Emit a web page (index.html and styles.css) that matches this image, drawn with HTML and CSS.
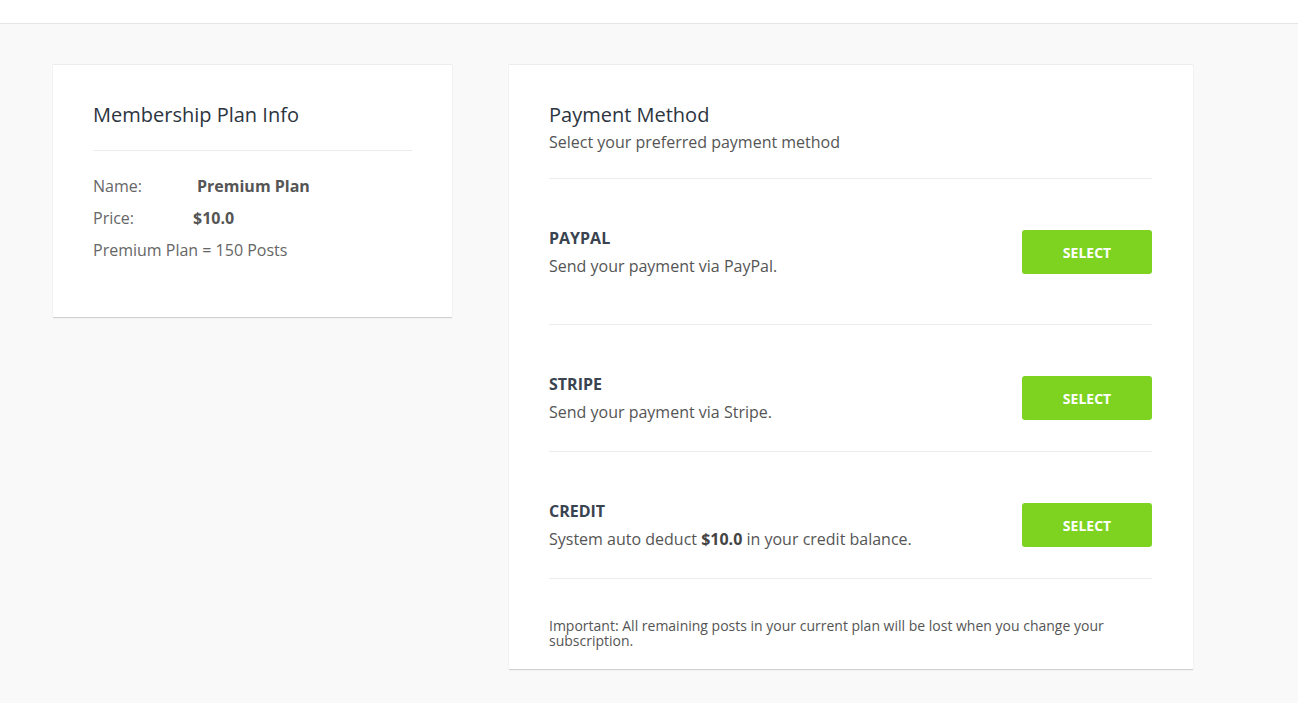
FILE: index.html
```html
<!DOCTYPE html>
<html lang="en">
<head>
<meta charset="utf-8">
<title>Membership Payment</title>
<link rel="stylesheet" href="styles.css">
</head>
<body>
<header class="topbar"></header>
<main class="content">
  <section class="card plan-card">
    <h2 class="card-title">Membership Plan Info</h2>
    <hr class="divider plan-divider">
    <div class="plan-row"><span class="label label-name">Name:</span><strong class="value">Premium Plan</strong></div>
    <div class="plan-row"><span class="label label-price">Price:</span><strong class="value">$10.0</strong></div>
    <div class="plan-row">Premium Plan = 150 Posts</div>
  </section>
  <section class="card pay-card">
    <h2 class="card-title">Payment Method</h2>
    <p class="subtitle">Select your preferred payment method</p>
    <hr class="divider head-divider">
    <div class="method method-first">
      <div class="method-text">
        <div class="method-name">PAYPAL</div>
        <div class="method-desc">Send your payment via PayPal.</div>
      </div>
      <button class="select-btn">SELECT</button>
    </div>
    <hr class="divider">
    <div class="method">
      <div class="method-text">
        <div class="method-name">STRIPE</div>
        <div class="method-desc">Send your payment via Stripe.</div>
      </div>
      <button class="select-btn">SELECT</button>
    </div>
    <hr class="divider">
    <div class="method">
      <div class="method-text">
        <div class="method-name">CREDIT</div>
        <div class="method-desc">System auto deduct <strong>$10.0</strong> in your credit balance.</div>
      </div>
      <button class="select-btn">SELECT</button>
    </div>
    <hr class="divider">
    <p class="notice">Important: All remaining posts in your current plan will be lost when you change your subscription.</p>
  </section>
</main>
</body>
</html>
```
FILE: styles.css
```css
* { box-sizing: border-box; }
html, body { margin: 0; padding: 0; }
body {
  background: #f9f9f9;
  font-family: "Open Sans", "Liberation Sans", sans-serif;
  color: #555;
  height: 703px;
  overflow: hidden;
}
.topbar {
  height: 24px;
  background: #fff;
  border-bottom: 1px solid #e6e6e6;
}
.content {
  display: flex;
  align-items: flex-start;
  gap: 57px;
  padding: 40px 0 0 53px;
}
.card {
  background: #fff;
  border-top: 1px solid #ececec;
  box-shadow: 0 1px 1px rgba(0,0,0,0.16);
}
.plan-card {
  width: 399px;
  height: 253px;
  padding: 37px 40px 0;
}
.pay-card {
  width: 684px;
  height: 605px;
  padding: 37px 41px 0 40px;
}
.card-title {
  margin: 0;
  font-size: 20px;
  line-height: 26px;
  font-weight: 500;
  color: #2c3540;
}
.subtitle {
  margin: 2px 0 0;
  font-size: 16px;
  line-height: 24px;
  color: #555;
}
.divider {
  border: 0;
  border-top: 1px solid #ececec;
  margin: 0;
  height: 0;
}
.plan-divider { margin-top: 22px; }
.head-divider { margin-top: 24px; }
.plan-row {
  font-size: 16px;
  line-height: 32px;
  color: #666;
}
.plan-divider + .plan-row { margin-top: 19px; }
.label { display: inline-block; }
.label-name { width: 104px; }
.label-price { width: 100px; }
.value { color: #555; font-weight: 700; }
.method {
  display: flex;
  align-items: center;
  justify-content: space-between;
  padding: 49px 0 29px;
}
.method-first { padding-bottom: 48px; }
.method-name {
  font-size: 16px;
  line-height: 20px;
  font-weight: 700;
  color: #3a4350;
}
.method-desc {
  margin-top: 8px;
  font-size: 16px;
  line-height: 20px;
  color: #555;
}
.method-desc strong { color: #444; }
.select-btn {
  width: 130px;
  height: 44px;
  border: 0;
  border-radius: 3px;
  background: #7ed321;
  color: #fff;
  font-family: inherit;
  font-size: 14px;
  font-weight: 700;
  cursor: pointer;
}
.notice {
  margin: 39px 0 0;
  font-size: 14px;
  line-height: 15px;
  color: #555;
}
```
